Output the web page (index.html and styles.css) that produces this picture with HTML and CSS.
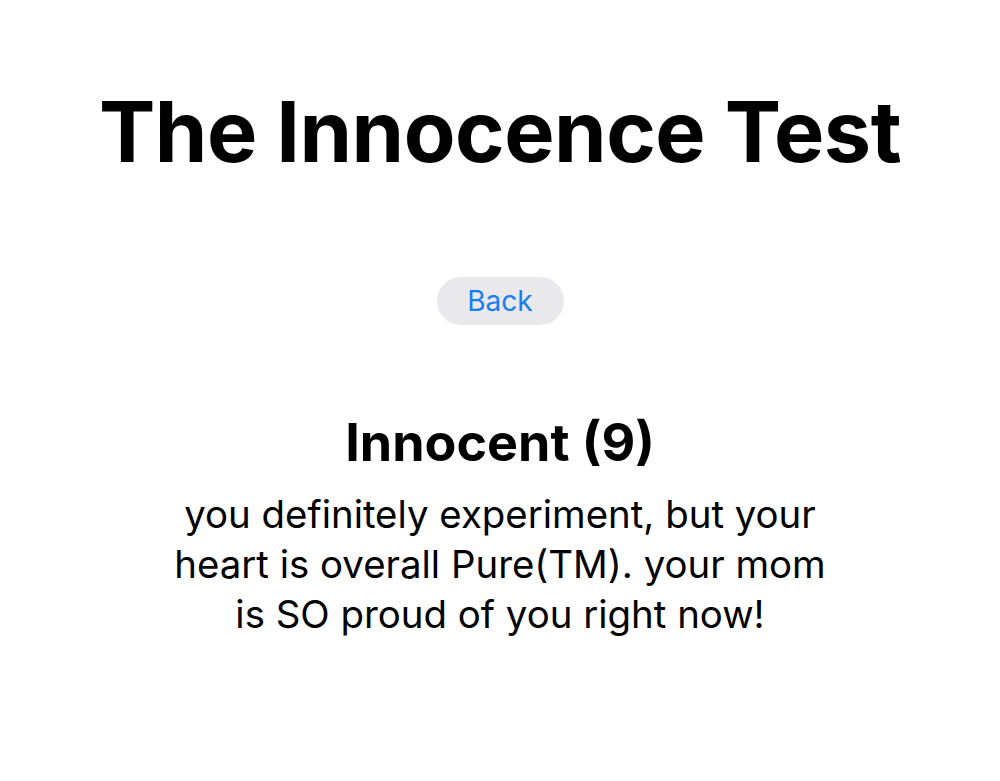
FILE: index.html
```html
<!DOCTYPE html>
<html>
<head>
<meta charset="utf-8">
<link rel="stylesheet" href="styles.css">
</head>
<body>
<main class="page">
  <h1 class="title">The Innocence Test</h1>
  <button class="back">Back</button>
  <section class="result">
    <h2 class="result-title">Innocent (9)</h2>
    <p class="result-text">you definitely experiment, but your heart is overall Pure(TM). your mom is SO proud of you right now!</p>
  </section>
</main>
</body>
</html>
```
FILE: styles.css
```css
html, body {
  margin: 0;
  padding: 0;
  background: #ffffff;
}
body {
  font-family: Inter, "Noto Sans", sans-serif;
  color: #000;
}
.page {
  display: flex;
  flex-direction: column;
  align-items: center;
  padding-top: 83px;
}
.title {
  margin: 0;
  font-size: 84.5px;
  font-weight: 700;
  line-height: 96px;
  letter-spacing: -0.5px;
}
.back {
  margin-top: 98px;
  width: 127px;
  height: 48px;
  border: none;
  border-radius: 24px;
  background: #e9e9eb;
  color: #1a7df2;
  font-family: inherit;
  font-size: 28px;
  padding: 0;
}
.result {
  margin-top: 88px;
  width: 672px;
  text-align: center;
}
.result-title {
  margin: 0;
  font-size: 52px;
  font-weight: 700;
  line-height: 60px;
}
.result-text {
  margin: 16px 0 0;
  font-size: 38.4px;
  line-height: 50px;
  font-weight: 400;
}
```
